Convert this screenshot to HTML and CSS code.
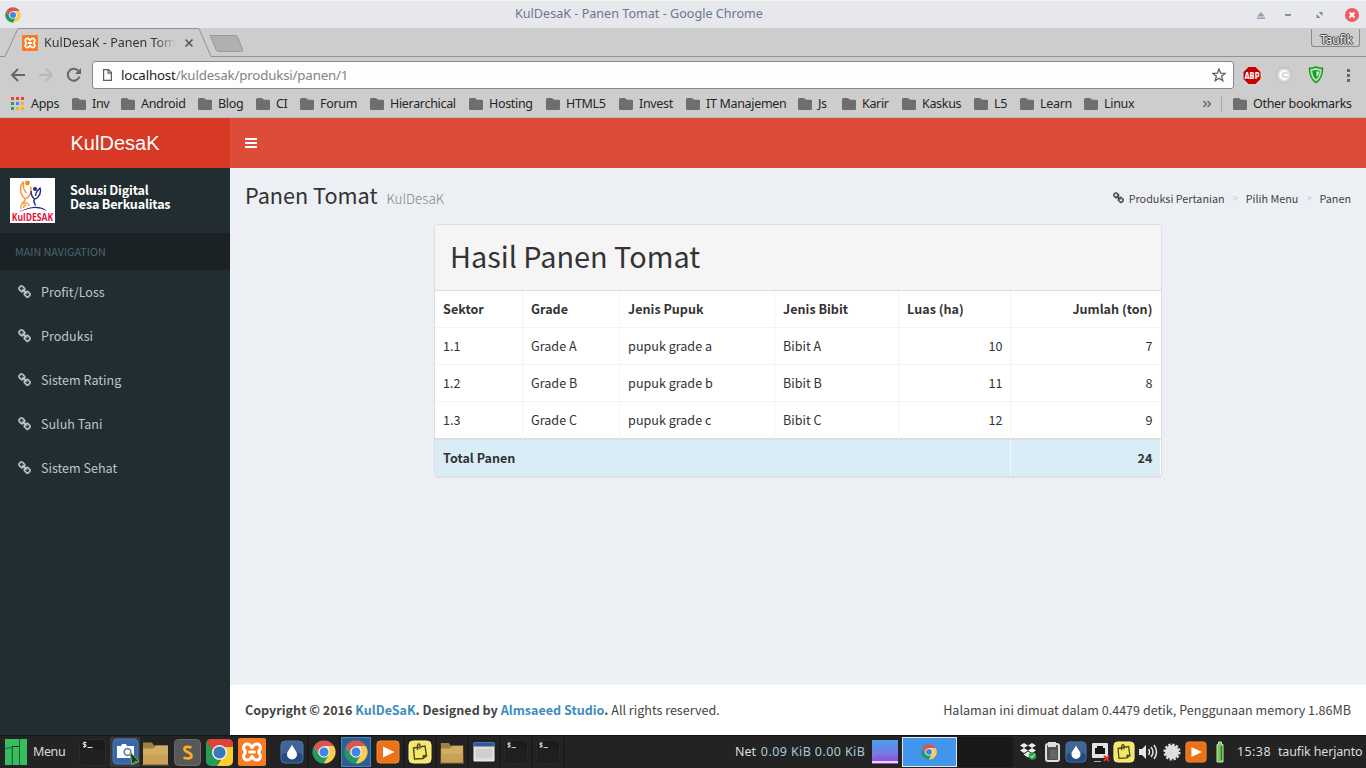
FILE: index.html
```html
<!DOCTYPE html>
<html lang="id">
<head>
<meta charset="utf-8">
<title>KulDesaK - Panen Tomat</title>
<link rel="stylesheet" href="styles.css">
</head>
<body>
<svg class="defs" aria-hidden="true">
  <symbol id="chrome" viewBox="0 0 48 48">
    <circle cx="24" cy="24" r="22" fill="#fff"/>
    <path d="M24 24 4 12.500A23 23 0 0 1 44 12.500H24Z" fill="#d8564b"/>
    <path d="M4 12.500A23 23 0 0 0 24 47L34 29.500 24 24 14 30Z" fill="#1f9b5d"/>
    <path d="M44 12.500A23 23 0 0 1 24 47L34 30 33 12.500Z" fill="#fccd48"/>
    <path d="M4 12.500 14 30 24 24 24 12.500 12 8Z" fill="#d8564b"/>
    <circle cx="24" cy="24" r="11.500" fill="#f2f2f2"/>
    <circle cx="24" cy="24" r="9" fill="#4285e8"/>
  </symbol>
  <symbol id="folder" viewBox="0 0 14 12"><path d="M1.500 0H6l2 1.800h4.700Q14 1.800 14 3v7.700Q14 12 12.700 12H1.300Q0 12 0 10.700V1.500Q0 0 1.500 0Z" fill="#6e6e6e"/></symbol>
  <symbol id="link" viewBox="0 0 1664 1792"><path fill="currentColor" stroke="currentColor" stroke-width="50" d="M1456 1216q0-40-28-68l-208-208q-28-28-68-28-42 0-72 32 3 3 19 18.500t21.500 21.500 15 19 13 25.500 3.500 27.500q0 40-28 68t-68 28q-15 0-27.500-3.500t-25.500-13-19-15-21.500-21.500-18.500-19q-33 31-33 73 0 40 28 68l206 207q27 27 68 27 40 0 68-26l147-146q28-28 28-67zm-703-705q0-40-28-68l-206-207q-28-28-68-28-39 0-68 27l-147 146q-28 28-28 67 0 40 28 68l208 208q27 27 68 27 42 0 72-31-3-3-19-18.500t-21.500-21.500-15-19-13-25.500-3.500-27.500q0-40 28-68t68-28q15 0 27.500 3.500t25.500 13 19 15 21.500 21.500 18.500 19q33-31 33-73zm895 705q0 120-85 203l-147 146q-83 83-203 83-121 0-204-85l-206-207q-83-83-83-203 0-123 88-209l-88-88q-86 88-208 88-120 0-204-84l-208-208q-84-84-84-204t85-203l147-146q83-83 203-83 121 0 204 85l206 207q83 83 83 203 0 123-88 209l88 88q86-88 208-88 120 0 204 84l208 208q84 84 84 204z"/></symbol>
  <symbol id="xampp" viewBox="0 0 28 28">
    <rect width="28" height="28" rx="2" fill="#fb7a24"/>
    <path d="M14 9.500C12.500 7 11 6 9.500 6 6 6 4.500 9.500 6.500 12q1.500 2 0 4C4.500 18.500 6 22 9.500 22c1.500 0 3-1 4.500-3.500 1.500 2.500 3 3.500 4.500 3.500 3.500 0 5-3.500 3-6q-1.500-2 0-4c2-2.500.5-6-3-6-1.500 0-3 1-4.500 3.500ZM11.500 14h5" fill="none" stroke="#fff" stroke-width="3.100" stroke-linecap="round" stroke-linejoin="round"/>
  </symbol>
  <symbol id="term" viewBox="0 0 27 27"><rect x=".5" y=".5" width="26" height="26" rx="4" fill="#1b1b1b" stroke="#2c2c2c"/><rect x="1" y="10" width="25" height="16" rx="4" fill="#202020"/><path d="M7.500 3.500H5.200Q4 3.500 4 4.500t1.200 1H6q1.300 0 1.300 1T6 7.700H4M5.700 2.500v6.300M8.500 8.500h5" fill="none" stroke="#e8e8e8"/></symbol>
  <symbol id="dir" viewBox="0 0 27 26"><path d="M1 3h9l2 3h14v19H1Z" fill="#9d8145"/><path d="M1 9h10l3-3h12v19H1Z" fill="#d3ae62"/><path d="M1 15h25v10H1Z" fill="#c8a258"/><path d="M0 25.500h27" stroke="#8a6c35"/></symbol>
  <symbol id="drop" viewBox="0 0 24 24"><rect x="1" y="1" width="22" height="22" rx="4" fill="#3f649a" stroke="#5374a2"/><rect x="1.500" y="13" width="21" height="9.500" rx="4" fill="#264b84"/><path d="M12 4.500c1 3.500 5 6.500 5 10a5 5 0 0 1-10 0c0-3.500 4-6.500 5-10Z" fill="#fff"/></symbol>
  <symbol id="play" viewBox="0 0 24 24"><rect x="1" y="1" width="22" height="22" rx="3" fill="#ed7116" stroke="#f28d35"/><path d="M7 6.500 18.500 12 7 17.500Z" fill="#fff"/></symbol>
  <symbol id="note" viewBox="0 0 24 24"><rect x="1" y="1" width="22" height="22" rx="4" fill="#f5e869" stroke="#fff395"/><path d="m5.500 8 11.500-2 1.500 10-3.500 2.500-8.500.5ZM12 9V5.500q0-1.500-1.200-1.500T9.500 5.500V10M15 18.500l.5-3 3 .5" fill="none" stroke="#4a4621" stroke-width="1.400"/></symbol>
</svg>

<header class="titlebar">
  <svg class="titlebar-icon"><use href="#chrome"/></svg>
  <span class="titlebar-text">KulDesaK - Panen Tomat - Google Chrome</span>
  <svg class="window-buttons" width="110" height="28" viewBox="0 0 110 28">
    <path d="m1 15.500 4-4.500 4 4.500ZM1 16.500h8V18H1Z" fill="#959eb2"/>
    <path d="M29 13h6v2h-6Z" fill="#8b91a0"/>
    <path d="M62.500 11h4v4ZM60.500 13v4h4Z" fill="#7f8798"/>
    <circle cx="96" cy="14" r="7" fill="#f35b62"/><path d="m93.500 11.500 5 5m0-5-5 5" stroke="#fff" stroke-width="2"/>
  </svg>
</header>

<div class="tabstrip">
  <svg class="tab-shape" width="1366" height="29" viewBox="0 0 1366 29">
    <path d="M0 28.500H5L18 .5H199L211 28.500H1366" fill="none" stroke="#929292"/>
    <path d="M210 7.500h25q2 0 2.800 2l4.700 12q.7 2-1.500 2h-22q-2 0-3-2l-5-12q-1-2-1-2Z" fill="#b0b0b0" stroke="#999"/>
  </svg>
  <div class="tab">
    <svg class="tab-icon"><use href="#xampp"/></svg>
    <span class="tab-title">KulDesaK - Panen Tomat</span>
    <svg width="10" height="10" viewBox="0 0 10 10"><path d="m1.500 1.500 7 7m0-7-7 7" stroke="#5a5a5a" stroke-width="1.700"/></svg>
  </div>
  <span class="profile">Taufik</span>
</div>

<div class="toolbar">
  <svg class="nav-icons" width="92" height="32" viewBox="0 0 92 32">
    <path d="M25 18H12m6-6-6 6 6 6" fill="none" stroke="#666" stroke-width="1.900"/>
    <path d="M39 18h13m-6-6 6 6-6 6" fill="none" stroke="#b8b8b8" stroke-width="1.900"/>
    <path d="M78.500 14a6 6 0 1 0 1 5.500" fill="none" stroke="#666" stroke-width="2"/><path d="M81 11v6h-6Z" fill="#666"/>
  </svg>
  <div class="address">
    <svg width="9" height="12" viewBox="0 0 9 12"><path d="M.6.6h5l2.800 3v7.800H.6ZM5 .6v3.500h3.500" fill="none" stroke="#5e5e5e" stroke-width="1.200"/></svg>
    <span class="url"><b>localhost</b>/kuldesak/produksi/panen/1</span>
    <svg class="star" width="14" height="14" viewBox="0 0 14 14"><path d="m7 1 1.600 4.200 4.600.2-3.600 2.900 1.200 4.400L7 10.200l-3.800 2.500 1.200-4.400L.8 5.400l4.600-.2Z" fill="none" stroke="#5c5c5c" stroke-width="1.300"/></svg>
  </div>
  <svg class="extensions" width="132" height="32" viewBox="0 0 132 32">
    <path d="M14.500 10h7l5 5v7l-5 5h-7l-5-5v-7Z" fill="#c90000"/><text x="10.500" y="21.500" textLength="15" lengthAdjust="spacingAndGlyphs" class="abp">ABP</text>
    <circle cx="50" cy="18" r="7.500" fill="#dcdcdc" stroke="#bababa"/><path d="M53 15a4 4 0 1 0 0 6M50 18h4.500" fill="none" stroke="#fff" stroke-width="2"/>
    <path d="M82 10q-4 1.500-6.500 1.200 0 10.300 6.500 14.300 6.500-4 6.500-14.300-2.500.3-6.500-1.200Z" fill="#b7e0b7" stroke="#119f1e" stroke-width="1.500"/><path d="M82 13q-2 .8-3.800.8.300 5.400 3.800 8.500 3.500-3.100 3.800-8.500-1.800 0-3.800-.8Z" fill="#119f1e"/><path d="M82.500 14.500h2.500q-.3 3-1.500 4.500h-1Z" fill="#fff"/>
    <path d="M113 12h3v3h-3Zm0 5h3v3h-3Zm0 5h3v3h-3Z" fill="#666"/>
  </svg>
</div>

<nav class="bookmarks">
  <div class="bookmark-list">
    <span class="bookmark"><svg class="apps-icon" width="13" height="13" viewBox="0 0 13 13"><path d="M0 0h3v3H0Zm5 0h3v3H5Zm5 0h3v3h-3Z" fill="#ed4132"/><path d="M0 5h3v3H0Zm0 5h3v3H0Z" fill="#25a05b"/><path d="M5 5h3v3H5Z" fill="#3b8af0"/><path d="M10 5h3v3h-3ZM5 10h3v3H5Zm5 0h3v3h-3Z" fill="#fbb40f"/></svg>Apps</span>
    <span class="bookmark"><svg><use href="#folder"/></svg>Inv</span>
    <span class="bookmark"><svg><use href="#folder"/></svg>Android</span>
    <span class="bookmark"><svg><use href="#folder"/></svg>Blog</span>
    <span class="bookmark"><svg><use href="#folder"/></svg>CI</span>
    <span class="bookmark"><svg><use href="#folder"/></svg>Forum</span>
    <span class="bookmark"><svg><use href="#folder"/></svg>Hierarchical</span>
    <span class="bookmark"><svg><use href="#folder"/></svg>Hosting</span>
    <span class="bookmark"><svg><use href="#folder"/></svg>HTML5</span>
    <span class="bookmark"><svg><use href="#folder"/></svg>Invest</span>
    <span class="bookmark"><svg><use href="#folder"/></svg>IT Manajemen</span>
    <span class="bookmark"><svg><use href="#folder"/></svg>Js</span>
    <span class="bookmark"><svg><use href="#folder"/></svg>Karir</span>
    <span class="bookmark"><svg><use href="#folder"/></svg>Kaskus</span>
    <span class="bookmark"><svg><use href="#folder"/></svg>L5</span>
    <span class="bookmark"><svg><use href="#folder"/></svg>Learn</span>
    <span class="bookmark"><svg><use href="#folder"/></svg>Linux</span>
  </div>
  <svg class="overflow" width="9" height="8" viewBox="0 0 9 8"><path d="m.5 1 3 3-3 3m4-6 3 3-3 3" fill="none" stroke="#5f5f5f" stroke-width="1.300"/></svg>
  <span class="divider"></span>
  <span class="bookmark"><svg><use href="#folder"/></svg>Other bookmarks</span>
</nav>

<div class="app">
  <aside class="sidebar">
    <div class="logo">KulDesaK</div>
    <div class="user-panel">
      <svg width="45" height="45" viewBox="0 0 45 45">
        <rect width="45" height="45" fill="#fff"/>
        <circle cx="17.500" cy="5" r="2.400" fill="#f28a1c"/><circle cx="25" cy="11" r="2" fill="#25258c"/>
        <path d="M13.500 3.500C9 8 10 17 15 20.500c1 3-2 3.500-3 5M20.500 8.500c2 5-.5 10-4.500 12M13.500 4c-1 5 0 8 3 11" fill="none" stroke="#f49a3a" stroke-width="1.500"/>
        <path d="M30 9.500c1.500 5 0 9-5.500 12-2 2 .5 3.500 1 6M21 13c0 4 1 6 3.500 8M30 10c-3 3-4 4-4.500 8" fill="none" stroke="#25258c" stroke-width="1.400"/>
        <path d="M11 31q-1-5 3.500-6t4.500 3M13.500 30q0-3 3-3" fill="none" stroke="#f49a3a" stroke-width="1.300"/>
        <path d="M9 34Q18 29 25 28.800T37 33q-6-3-12-3T9 34Z" fill="#25258c"/>
        <text x="1.700" y="43" textLength="41.500" lengthAdjust="spacingAndGlyphs" class="logo-word">KulDESAK</text>
      </svg>
      <p class="user-name">Solusi Digital<br>Desa Berkualitas</p>
    </div>
    <div class="nav-header">MAIN NAVIGATION</div>
    <ul class="menu">
      <li><svg><use href="#link"/></svg>Profit/Loss</li>
      <li><svg><use href="#link"/></svg>Produksi</li>
      <li><svg><use href="#link"/></svg>Sistem Rating</li>
      <li><svg><use href="#link"/></svg>Suluh Tani</li>
      <li><svg><use href="#link"/></svg>Sistem Sehat</li>
    </ul>
  </aside>
  <main class="main">
    <div class="navbar"><svg width="12" height="10" viewBox="0 0 12 10"><path d="M0 0h12v2H0Zm0 4h12v2H0Zm0 4h12v2H0Z" fill="#fff"/></svg></div>
    <div class="content-header">
      <h1>Panen Tomat <small>KulDesaK</small></h1>
      <div class="breadcrumb"><svg><use href="#link"/></svg><span>Produksi Pertanian</span><i>&gt;</i><span>Pilih Menu</span><i>&gt;</i><span>Panen</span></div>
    </div>
    <section class="content">
      <div class="panel">
        <h2>Hasil Panen Tomat</h2>
        <table>
          <colgroup><col class="c1"><col class="c2"><col class="c3"><col class="c4"><col class="c5"><col class="c6"></colgroup>
          <thead><tr><th>Sektor</th><th>Grade</th><th>Jenis Pupuk</th><th>Jenis Bibit</th><th>Luas (ha)</th><th class="num">Jumlah (ton)</th></tr></thead>
          <tbody>
            <tr><td>1.1</td><td>Grade A</td><td>pupuk grade a</td><td>Bibit A</td><td class="num">10</td><td class="num">7</td></tr>
            <tr><td>1.2</td><td>Grade B</td><td>pupuk grade b</td><td>Bibit B</td><td class="num">11</td><td class="num">8</td></tr>
            <tr><td>1.3</td><td>Grade C</td><td>pupuk grade c</td><td>Bibit C</td><td class="num">12</td><td class="num">9</td></tr>
          </tbody>
          <tfoot><tr><th colspan="5">Total Panen</th><th class="num">24</th></tr></tfoot>
        </table>
      </div>
    </section>
    <footer class="footer">
      <div><b>Copyright © 2016 <a>KulDeSaK</a>. Designed by <a>Almsaeed Studio</a>.</b> All rights reserved.</div>
      <div class="stats">Halaman ini dimuat dalam 0.4479 detik, Penggunaan memory 1.86MB</div>
    </footer>
  </main>
</div>

<footer class="taskbar">
  <div class="start">
    <svg width="22" height="26" viewBox="0 0 22 26"><path d="M0 0h14v7H7v19H0Z" fill="#35bf5c"/><path d="M7.500 8h6.500v18H7.500ZM15 0h7v26h-7Z" fill="#35bf5c"/><path d="M7.200 7v19M14.500 0v26M0 9.500l7-1" stroke="#1d5b31" stroke-width=".9"/></svg>
    <span class="start-label">Menu</span>
  </div>
  <div class="launchers">
    <svg><use href="#term"/></svg>
    <span class="hover-slot"><svg viewBox="0 0 27 27"><rect x="1" y="1" width="25" height="25" rx="4" fill="#3868ac" stroke="#4e79b3"/><path d="M5 8h4l1-2h4l1 2h7v12H5Z" fill="#fff"/><circle cx="15.500" cy="14" r="4.200" fill="#6987b5"/><circle cx="15.500" cy="14" r="2.500" fill="#fff"/><path d="m18 14 10 10-5-.5-3 4Z" fill="#243b24" stroke="#83b85b"/></svg></span>
    <svg><use href="#dir"/></svg>
    <svg viewBox="0 0 27 27"><rect x=".5" y=".5" width="26" height="26" rx="4" fill="#585858" stroke="#6c6c6c"/><path d="M17.500 8.500q-7-2-7 1.700c0 3 7 3 7 6.500q0 4-8 2" fill="none" stroke="#ffa928" stroke-width="2.700"/></svg>
    <svg viewBox="0 0 27 27"><defs><clipPath id="round"><rect width="27" height="27" rx="5"/></clipPath></defs><g clip-path="url(#round)"><path d="M0 0h27v9H0Z" fill="#dd4338"/><path d="M0 0v27h11l5-9-6-2Z" fill="#259b58"/><path d="M27 8H13l5 8-7 11h16Z" fill="#f9cf32"/><path d="M0 0h27v8H13L7 13Z" fill="#dd4338"/><circle cx="13.500" cy="13.500" r="7.500" fill="#eee"/><circle cx="13.500" cy="13.500" r="6" fill="#3978b9"/></g></svg>
    <svg viewBox="0 0 28 28"><use href="#xampp"/></svg>
  </div>
  <div class="windows">
    <span><svg><use href="#drop"/></svg></span>
    <span><svg><use href="#chrome"/></svg></span>
    <span class="current"><svg><use href="#chrome"/></svg></span>
    <span><svg><use href="#play"/></svg></span>
    <span><svg><use href="#note"/></svg></span>
    <span><svg><use href="#dir"/></svg></span>
    <span><svg viewBox="0 0 24 24"><path d="M2 3h20v18H2Z" fill="#ddd" stroke="#f3f3f0"/><path d="M1.500 2.500h21v4h-21Z" fill="#2c5c9e"/><path d="M4 9h16v9H4Z" fill="#d0d0ca"/></svg></span>
    <span><svg><use href="#term"/></svg></span>
    <span><svg><use href="#term"/></svg></span>
  </div>
  <div class="net"><span>Net</span> <span class="rate">0.09 KiB 0.00 KiB</span></div>
  <svg class="wallpaper" viewBox="0 0 26 24"><defs><linearGradient id="wp" x2="0" y2="1"><stop stop-color="#49a0e8"/><stop offset=".5" stop-color="#6e7ce6"/><stop offset="1" stop-color="#9a42d4"/></linearGradient></defs><rect width="26" height="24" fill="url(#wp)"/><path d="m0 12 8-4 7 5 11-5v6l-9 3-8-3-9 5Z" fill="#9589ed" opacity=".25"/><path d="M0 22h26" stroke="#ead4f4" stroke-width="2"/></svg>
  <div class="pager"><span class="desk"><svg><use href="#chrome"/></svg></span><span class="desk-empty"></span></div>
  <div class="tray">
    <svg viewBox="0 0 22 24"><path d="m7 3 4 2.500L7 8 3 5.500Zm8 0 4 2.500L15 8l-4-2.500ZM7 8l4 2.500L7 13l-4-2.500ZM15 8l4 2.500-4 2.500-4-2.500ZM6.500 14.500l4.500-3 4 2.500-4 3.500Z" fill="#eee"/><circle cx="15.500" cy="16" r="3.800" fill="#27a647"/><path d="m13.500 16 1.500 1.500 2.500-3" fill="none" stroke="#fff"/></svg>
    <svg viewBox="0 0 22 24"><rect x="5" y="4" width="13" height="17" rx="2" fill="#505050" stroke="#ddd" stroke-width="2"/><path d="M7 2h8v5H7Z" fill="#ddd"/><path d="M9 10h7v9H9Z" fill="#666"/></svg>
    <svg><use href="#drop"/></svg>
    <svg viewBox="0 0 22 24"><rect x="3" y="3" width="16" height="15" rx="1" fill="#e2e2e2"/><path d="M6 14V8h2V6h6v2h2v6Z" fill="#151515"/><path d="M5 21.500h7" stroke="#aaa"/><path d="m15 16 5 5m0-5-5 5" stroke="#e32c20" stroke-width="2"/></svg>
    <svg><use href="#note"/></svg>
    <svg viewBox="0 0 22 24"><path d="M2 9h3l4-4v14l-4-4H2Z" fill="#e6e6e6"/><path d="M11.500 9q2 3 0 6m2.500-8q4 5 0 10m3-12q5 7 0 14" fill="none" stroke="#ddd" stroke-width="1.600"/></svg>
    <svg viewBox="0 0 22 24"><circle cx="11" cy="12" r="7" fill="#dedede"/><circle cx="11" cy="12" r="7.400" fill="none" stroke="#dedede" stroke-width="2.400" stroke-dasharray="2.300 1.570"/></svg>
    <svg><use href="#play"/></svg>
    <svg viewBox="0 0 22 24"><path d="M9.500 2h3v2.500H14V22H8V4.500h1.500Z" fill="#77c757" stroke="#c5e5b8"/><path d="M12.500 6v14" stroke="#36762a" stroke-width="1.500"/></svg>
  </div>
  <span class="clock">15:38</span>
  <span class="account">taufik herjanto</span>
</footer>
</body>
</html>
```
FILE: styles.css
```css
* { box-sizing: border-box; }
body {
  margin: 0;
  width: 1366px;
  height: 768px;
  overflow: hidden;
  display: flex;
  flex-direction: column;
  font-family: "Noto Sans CJK SC", "Noto Sans", sans-serif;
  font-size: 12.570px;
  line-height: 20px;
  color: #333;
}
svg { display: block; flex: none; }
.defs { position: absolute; width: 0; height: 0; }

/* window chrome */
.titlebar, .tabstrip, .toolbar, .bookmarks, .taskbar { font-family: "Noto Sans", sans-serif; font-size: 12.500px; white-space: nowrap; }
.titlebar {
  height: 28px;
  flex: none;
  display: grid;
  grid-template-columns: 256px 1fr 256px;
  align-items: center;
  padding-bottom: 1px;
  background: #e7e8eb;
  border-top: 1px solid #f1f2f4;
  color: #6d7690;
}
.titlebar-icon { width: 16px; height: 16px; margin: 0 0 1px 5px; }
.titlebar-text { justify-self: center; margin-right: 88px; font-size: 12.600px; padding-bottom: 2px; }
.window-buttons { justify-self: end; }

.tabstrip { height: 29px; flex: none; position: relative; display: flex; justify-content: space-between; background: #cdcdcd; }
.tab-shape { position: absolute; left: 0; top: 0; }
.tab { display: flex; align-items: center; height: 29px; padding-left: 22px; color: #333; }
.tab-icon { width: 16px; height: 16px; margin-right: 6px; }
.tab-title { width: 132px; margin-right: 8px; overflow: hidden; -webkit-mask-image: linear-gradient(to right, #000 84%, transparent); mask-image: linear-gradient(to right, #000 84%, transparent); }
.profile {
  width: 49px; height: 18px; margin: 1px 6px 0 0; padding-left: 2px; text-align: center;
  border: 1px solid #8a8a8a; border-top: 0; border-radius: 0 0 3px 3px;
  font-size: 11.800px; line-height: 20px; letter-spacing: -.1px; color: #f4f4f4;
  text-shadow: 1px 0 #444, -1px 0 #444, 0 1px #444, 0 -1px #444;
}

.toolbar { height: 34px; flex: none; display: flex; background: #cdcdcd; }
.address {
  width: 1142px; height: 28px; margin-top: 4px; padding: 0 7px 0 10px;
  display: flex; align-items: center;
  background: #fdfdfd; border: 1px solid #888; border-radius: 3px;
}
.url { margin-left: 9px; font-size: 13.300px; letter-spacing: -.17px; color: #838383; }
.url b { font-weight: 400; color: #1c1c1c; }
.star { margin-left: auto; }
.abp { font: bold 8px "DejaVu Sans", sans-serif; fill: #fff; }

.bookmarks { height: 27px; flex: none; display: flex; align-items: center; padding: 0 0 1px 11px; background: #cdcdcd; color: #262626; border-bottom: 1px solid #bcbcbc; letter-spacing: -.32px; }
.bookmark-list { width: 1192px; display: grid; grid-template-columns: 61px 49px 77px 58px 44px 70px 99px 77px 73px 67px 112px 44px 60px 72px 46px 64px 1fr; }
.bookmark { display: flex; align-items: center; }
.bookmark svg { width: 14px; height: 12px; margin-right: 6px; }
.bookmark .apps-icon { width: 13px; height: 13px; margin-right: 7px; }
.overflow { margin-right: 9px; }
.divider { width: 1px; height: 16px; margin-right: 11px; background: #aaa; }

/* application */
.app { height: 617px; flex: none; display: flex; }
.sidebar { width: 230px; background: #222d32; color: #b8c7ce; }
.logo { height: 50px; background: #d73925; color: #fff; text-align: center; font: 20px/50px "Liberation Sans", Arial, sans-serif; }
.user-panel { height: 65px; display: flex; padding: 10px; }
.logo-word { font: bold 10px "Open Sans", sans-serif; fill: #e8103c; }
.user-name { margin: 5px 0 0 15px; line-height: 14px; font-weight: 600; letter-spacing: -.18px; color: #fff; }
.nav-header { height: 37px; padding: 9px 15px 8px; background: #1a2226; color: #4b646f; font-size: 10.750px; }
.menu { list-style: none; margin: 0; padding: 0; }
.menu li { height: 44px; display: flex; align-items: center; padding-left: 18px; }
.menu svg { width: 13px; height: 14px; margin-right: 10px; }

.main { width: 1136px; display: flex; flex-direction: column; background: #ecf0f5; }
.navbar { height: 50px; display: flex; align-items: center; padding-left: 15px; background: #dd4b39; }
.content-header { height: 56px; display: flex; justify-content: space-between; padding: 14px 15px 0; }
h1 { margin: 0; font-size: 21.650px; line-height: 26px; font-weight: 400; }
h1 small { font-size: 13.430px; font-weight: 300; color: #858585; padding-left: 4px; }
.breadcrumb { display: flex; align-items: center; height: 17px; margin-top: 7px; font-size: 10.800px; color: #444; }
.breadcrumb svg { width: 11px; height: 12px; margin-right: 5px; }
.breadcrumb i { font-style: normal; color: #ccc; font-size: 10px; margin: 0 7.500px 0 8px; }
.content { flex: 1; padding-left: 204px; }
.panel { width: 728px; height: 253px; background: #fff; border: 1px solid #ddd; border-radius: 4px; box-shadow: 0 1px 1px rgba(0,0,0,.05); overflow: hidden; }
h2 { margin: 0; height: 66px; padding: 0 15px 4px; background: #f5f5f5; border-bottom: 1px solid #ddd; font-weight: 400; font-size: 28.850px; line-height: 62px; }
table { width: 726px; table-layout: fixed; border-collapse: separate; border-spacing: 0; }
.c1 { width: 88px; }
.c2 { width: 97px; }
.c3 { width: 155px; }
.c4 { width: 124px; }
.c5 { width: 112px; }
.c6 { width: 150px; }
th, td { height: 37px; padding: 0 7.600px 0 8.100px; text-align: left; line-height: 20px; border-right: 1px solid #f4f4f4; border-bottom: 1px solid #f4f4f4; }
th:last-child, td:last-child { border-right-color: #fff; }
tbody tr:last-child td { border-bottom: 2px solid #ddd; height: 38px; }
tfoot th { height: 36px; background: #d9edf7; background-clip: padding-box; border-bottom: 0; }
th.num, td.num { text-align: right; }
.footer { height: 50px; display: flex; justify-content: space-between; padding: 15px; background: #fff; color: #444; }
.footer a { color: #3c8dbc; }
.stats { font-size: 12.580px; }

/* desktop panel */
.taskbar { height: 33px; flex: none; display: flex; align-items: center; background: #232323; border-top: 1px solid #151515; color: #ddd; }
.start { width: 79px; display: flex; align-items: center; padding-left: 5px; }
.start-label { margin-left: 6px; letter-spacing: -.4px; padding-bottom: 1px; }
.launchers { width: 198px; height: 32px; display: grid; grid-template-columns: 31px 32px 32px 32px 32px 28px; align-items: center; }
.launchers svg { width: 27px; height: 27px; }
.launchers > svg:last-child { width: 28px; height: 28px; }
.hover-slot { height: 30px; padding: 1px 0 0 2px; background: #393939; width: 30px; }
.windows { width: 288px; display: flex; }
.windows span { width: 32px; height: 30px; display: grid; place-items: center; border-right: 2px solid #1b1b1b; }
.windows svg { width: 24px; height: 24px; }
.windows .current { background: #2d5f94; border: 1px solid #4285bd; width: 30px; margin-right: 2px; }
.net { width: 137px; margin-left: 170px; }
.rate { color: #a5cad6; letter-spacing: .4px; margin-left: 1.500px; }
.wallpaper { width: 26px; height: 24px; }
.pager { display: flex; margin-left: 4px; height: 30px; }
.desk { width: 55px; height: 30px; border: 1px solid #e6e6e6; background: #4295ed; display: grid; place-items: center; }
.desk svg { width: 16px; height: 16px; margin-right: 2px; }
.desk-empty { width: 56px; background: #191919; }
.tray { display: flex; width: 224px; padding-left: 4px; }
.tray svg { width: 22px; height: 24px; margin-right: 2px; }
.clock { width: 41px; letter-spacing: .4px; }
.account { letter-spacing: -.15px; }
```
